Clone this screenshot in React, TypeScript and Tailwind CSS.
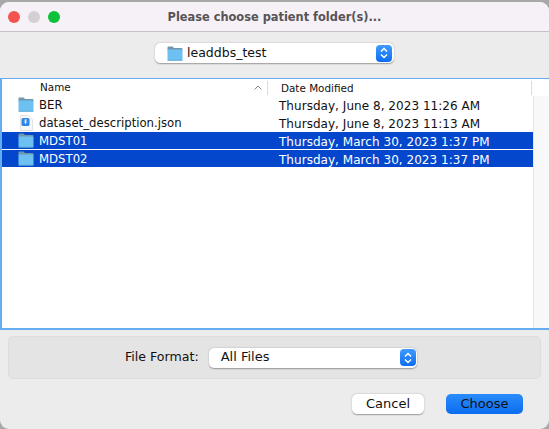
import React from 'react';

const FolderIcon = () => (
  <svg width="16" height="15" viewBox="0 0 16 15" className="shrink-0">
    <path d="M0.5 4 V1.6 Q0.5 0.5 1.6 0.5 H5.2 Q6 0.5 6.4 1.2 L6.9 2 H14.4 Q15.5 2 15.5 3.1 V4.5 H0.5Z" fill="#6f97ad" />
    <rect x="0.5" y="3.5" width="15" height="11" rx="1" fill="#6cc1f2" />
    <rect x="0.5" y="13.8" width="15" height="0.8" fill="#4b9fd3" />
  </svg>
);

const JsonIcon = () => (
  <span className="w-[16px] flex justify-center shrink-0">
    <svg width="14" height="16" viewBox="0 0 14 16">
      <path d="M1.5 0.5 H9.5 L13.5 4.5 V15.5 H1.5Z" fill="#f7f7f7" stroke="#e2e2e2" />
      <rect x="2.5" y="3" width="8" height="8" rx="1.5" fill="#2f86ee" />
      <path d="M5.5 5 H8 M6.5 5 V9 M5 7 H8" stroke="#dcebfb" strokeWidth="1" fill="none" />
    </svg>
  </span>
);

const Stepper = () => (
  <span className="w-[16px] h-[17px] rounded-[4px] bg-gradient-to-b from-[#3f9bff] to-[#0a6cf0] flex items-center justify-center shrink-0">
    <svg width="10" height="14" viewBox="0 0 10 14">
      <path d="M2 5.5 L5 2.5 L8 5.5 M2 8.5 L5 11.5 L8 8.5" stroke="#fff" strokeWidth="1.5" fill="none" />
    </svg>
  </span>
);

const rows = [
  { name: 'BER', date: 'Thursday, June 8, 2023 11:26 AM', json: false, selected: false },
  { name: 'dataset_description.json', date: 'Thursday, June 8, 2023 11:13 AM', json: true, selected: false },
  { name: 'MDST01', date: 'Thursday, March 30, 2023 1:37 PM', json: false, selected: true },
  { name: 'MDST02', date: 'Thursday, March 30, 2023 1:37 PM', json: false, selected: true },
];

export default function App() {
  return (
    <div className="w-[549px] h-[429px] bg-[#a8a8a8] pt-[2px] overflow-hidden font-['DejaVu_Sans',sans-serif] text-[12px] text-[#111111]">
      <div className="h-[427px] rounded-[9px] bg-[#ececec] flex flex-col overflow-hidden">
        {/* Title bar */}
        <div className="relative h-[30px] shrink-0 bg-[#f6f0f7] border-b border-[#c4c2c4] flex items-center justify-center">
          <div className="absolute left-[8px] top-[9px] flex gap-[8px]">
            <span className="w-[12px] h-[12px] rounded-full bg-[#f4544f]" />
            <span className="w-[12px] h-[12px] rounded-full bg-[#d3cfd3]" />
            <span className="w-[12px] h-[12px] rounded-full bg-[#0cc13b]" />
          </div>
          <span className="font-bold text-[11.4px] text-[#565456] pt-[2px]">Please choose patient folder(s)...</span>
        </div>

        {/* Folder popup */}
        <div className="h-[46px] shrink-0 flex justify-center pt-[11px]">
          <div className="w-[239px] h-[20px] bg-white rounded-[5px] shadow-[0_0.5px_1.5px_rgba(0,0,0,0.35)] flex items-center pl-[12px] pr-[2px] gap-[4px]">
            <FolderIcon />
            <span className="flex-1 text-[12.5px]">leaddbs_test</span>
            <Stepper />
          </div>
        </div>

        {/* File list */}
        <div className="h-[252px] shrink-0 bg-white border-l-2 border-t border-b-2 border-[#64adf2] flex flex-col">
          <div className="h-[17px] shrink-0 flex items-center">
            <div className="w-[266px] flex items-center justify-between border-r border-[#dcdcdc] h-[14px] pl-[38px] pr-[5px]">
              <span className="text-[10.4px]">Name</span>
              <svg width="8" height="5" viewBox="0 0 8 5">
                <path d="M0.5 4.5 L4 1 L7.5 4.5" stroke="#8a8a8a" strokeWidth="1" fill="none" />
              </svg>
            </div>
            <span className="pl-[13px] text-[10.4px] w-[264px] border-r border-[#dcdcdc] h-[14px] leading-[14px]">Date Modified</span>
          </div>
          <div className="flex-1 flex min-h-0">
            <div className="w-[531px] flex flex-col gap-px">
              {rows.map((row) => (
                <div
                  key={row.name}
                  className={`h-[17px] flex items-center ${row.selected ? 'bg-[#0447cc] text-white' : ''}`}
                >
                  <div className="w-[277px] pl-[16px] flex items-center gap-[5px] text-[11.7px]">
                    {row.json ? <JsonIcon /> : <FolderIcon />}
                    <span className="pt-[2px]">{row.name}</span>
                  </div>
                  <span className="tracking-[0.04px] pt-[2px]">{row.date}</span>
                </div>
              ))}
            </div>
            <div className="flex-1 bg-[#f8f8f8] border-l border-[#e6e6e6]" />
          </div>
        </div>

        {/* File format */}
        <div className="mx-[8px] mt-[6px] h-[43px] shrink-0 bg-[#e4e4e4] border border-[#dddddd] rounded-[5px] flex items-center pl-[116px]">
          <span className="mr-[10px] text-[12.6px]">File Format:</span>
          <div className="w-[208px] h-[20px] bg-white rounded-[5px] shadow-[0_0.5px_1.5px_rgba(0,0,0,0.35)] flex items-center justify-between pl-[12px] pr-[1px]">
            <span className="text-[13px] pb-px">All Files</span>
            <Stepper />
          </div>
        </div>

        {/* Buttons */}
        <div className="flex justify-end gap-[22px] pr-[26px] mt-[15px] text-[13px]">
          <button className="w-[72px] h-[20px] bg-white rounded-[5px] shadow-[0_0.5px_1.5px_rgba(0,0,0,0.35)]">Cancel</button>
          <button className="w-[77px] h-[20px] rounded-[5px] bg-gradient-to-b from-[#2a8cfb] to-[#0a6cf0]">Choose</button>
        </div>
      </div>
    </div>
  );
}
